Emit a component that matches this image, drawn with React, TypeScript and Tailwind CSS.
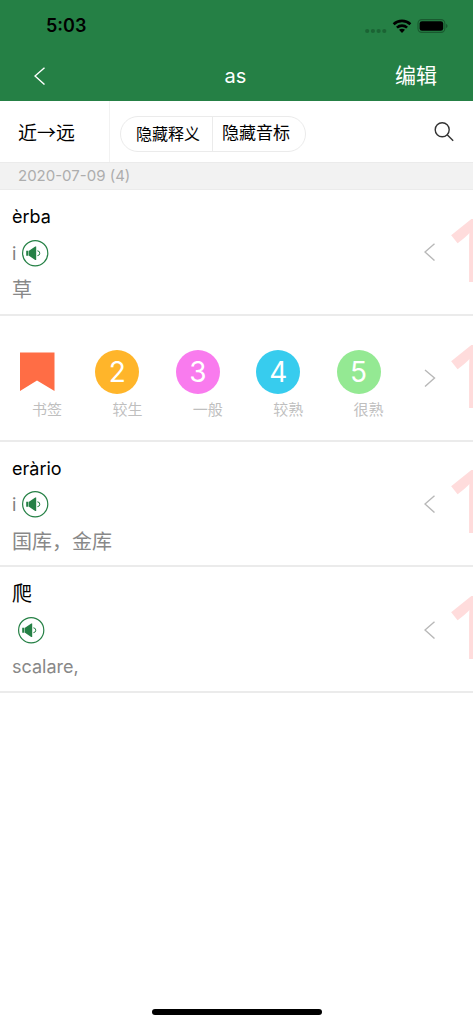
import { useState } from "react";

interface Word {
  id: number;
  text: string;
  phonetic: string;
  meaning: string;
}

const words: Word[] = [
  { id: 1, text: "èrba", phonetic: "i", meaning: "草" },
  { id: 2, text: "erba", phonetic: "i", meaning: "草" },
  { id: 3, text: "eràrio", phonetic: "i", meaning: "国库，金库" },
  { id: 4, text: "爬", phonetic: "", meaning: "scalare," },
];

const levels = [
  { value: "2", label: "较生", color: "bg-[#ffb52a]" },
  { value: "3", label: "一般", color: "bg-[#f97bee]" },
  { value: "4", label: "较熟", color: "bg-[#37ccee]" },
  { value: "5", label: "很熟", color: "bg-[#94e993]" },
];

// Latin glyphs run wide, so they are set a little smaller than Chinese
const textSize = (text: string) =>
  /[\u4e00-\u9fff]/.test(text) ? "text-[20px]" : "text-[18px]";

function Chevron({ flipped = false }: { flipped?: boolean }) {
  return (
    <svg viewBox="0 0 12 18" className="w-3 h-[18px]" fill="none" stroke="currentColor" strokeWidth="1.4">
      <path d={flipped ? "M1 1 L10.5 9 L1 17.5" : "M10.5 0.8 L1 9 L10.5 17.5"} />
    </svg>
  );
}

function StatusBar() {
  return (
    <div className="flex items-center justify-between h-[51px] pl-[46px] pr-[25px] pt-px text-black">
      <span className="text-[18px] leading-6 font-semibold">5:03</span>
      <div className="flex items-center">
        <svg viewBox="0 0 22 6" className="w-[22px] h-[6px] mt-[9px]" fill="#1b6334">
          <circle cx="2.2" cy="3" r="2.1" />
          <circle cx="7.9" cy="3" r="2.1" />
          <circle cx="13.6" cy="3" r="2.1" />
          <circle cx="19.3" cy="3" r="2.1" />
        </svg>
        <svg viewBox="0 0 20 14" className="w-5 h-[14px] ml-[5px]" fill="none" stroke="#000" strokeWidth="2.6">
          <path d="M1.6 5.2 C6.3 0.7 13.7 0.7 18.4 5.2" />
          <path d="M4.9 8.6 C7.8 5.9 12.2 5.9 15.1 8.6" />
          <path d="M7 10.8 Q10 8.6 13 10.8 L10 13.9 Z" fill="#000" stroke="none" />
        </svg>
        <svg viewBox="0 0 31 14" className="w-[31px] h-[14px] ml-[5px]">
          <rect x="1" y="0.6" width="26.8" height="12.8" rx="3.8" fill="none" stroke="#19592f" strokeWidth="1.1" />
          <rect x="2.6" y="2.2" width="23.6" height="9.6" rx="2.4" fill="#000" />
          <path d="M28.9 4.7 Q30.6 5.4 30.6 7 Q30.6 8.6 28.9 9.3 Z" fill="#19592f" />
        </svg>
      </div>
    </div>
  );
}

function SpeakerButton() {
  return (
    <button type="button" aria-label="发音" className="block">
      <svg viewBox="0 0 27 27" className="w-[27px] h-[27px]">
        <circle cx="13.2" cy="13.2" r="12.6" fill="none" stroke="#258045" strokeWidth="1.2" />
        <path d="M4.2 10.7 H6.5 V15.8 H4.2 Z M7 10.7 L13.2 6.6 H14.2 V20 H13.2 L7 15.8 Z" fill="#258045" />
        <path d="M15.4 10.8 Q17.8 11 17.8 13.2 Q17.8 15.5 15.4 15.7" fill="none" stroke="#258045" strokeWidth="1" />
      </svg>
    </button>
  );
}

function WordRow({ word }: { word: Word }) {
  return (
    <div className="flex-1 pl-3 pt-[9px]">
      <h2 className={`flex items-center h-9 leading-7 text-black ${textSize(word.text)}`}>{word.text}</h2>
      <div className="flex items-center h-9 gap-[6px] text-[18px] text-[#808080]">
        <span>{word.phonetic}</span>
        <SpeakerButton />
      </div>
      <p className={`flex items-center h-[38px] leading-7 text-[#888888] ${textSize(word.meaning)}`}>{word.meaning}</p>
    </div>
  );
}

function LevelPicker() {
  return (
    <div className="flex-1 grid grid-cols-5 content-start pl-[15px] pr-[7px] pt-[34px]">
      <button type="button" className="text-left">
        <span className="flex items-center justify-center w-11 h-11">
          <svg viewBox="0 0 35 39" className="w-[35px] h-[39px]">
            <path d="M0 0.5 H34.5 V39 L17 28.5 L0 39 Z" fill="#ff6d45" />
          </svg>
        </span>
        <span className="block pl-[17px] mt-1 text-[15px] leading-6 text-[#bfbfbf]">书签</span>
      </button>
      {levels.map((level) => (
        <button key={level.value} type="button" className="text-left">
          <span className={`flex items-center justify-center w-11 h-11 rounded-full text-[28px] text-white ${level.color}`}>
            {level.value}
          </span>
          <span className="block pl-[17px] mt-1 text-[15px] leading-6 text-[#bfbfbf]">{level.label}</span>
        </button>
      ))}
    </div>
  );
}

export default function App() {
  const [openId, setOpenId] = useState<number | null>(2);

  return (
    <div className="flex flex-col min-h-screen bg-white font-['Inter','Noto_Sans_CJK_SC',sans-serif]" lang="zh-CN">
      <header className="h-[101px] bg-[#258045] text-white">
        <StatusBar />
        <div className="grid grid-cols-3 items-center h-[50px] pl-[34px] pr-9">
          <button type="button" aria-label="返回" className="justify-self-start">
            <Chevron />
          </button>
          <h1 className="text-center text-[20px] leading-7">as</h1>
          <button type="button" className="justify-self-end text-[21px] leading-7">编辑</button>
        </div>
      </header>

      <div className="flex items-center h-[61px] pr-[19px] text-black">
        <button type="button" className="w-[110px] h-full pt-[2px] pl-[18px] border-r border-[#f2f2f2] text-left text-[19px] font-['Noto_Sans_CJK_SC',sans-serif]">
          近→远
        </button>
        <div className="flex h-9 ml-[10px] mt-1 border border-[#ebebeb] rounded-full">
          <button type="button" className="w-[92px] pl-[15px] border-r border-[#ebebeb] text-left text-[16px] whitespace-nowrap">隐藏释义</button>
          <button type="button" className="w-[92px] pl-[9px] text-left text-[17px] whitespace-nowrap">隐藏音标</button>
        </div>
        <button type="button" aria-label="搜索" className="ml-auto">
          <svg viewBox="0 0 20 20" className="w-5 h-5" fill="none" stroke="#333" strokeWidth="1.4">
            <circle cx="8.2" cy="7.8" r="7" />
            <path d="M13.2 12.8 L19.2 18.8" />
          </svg>
        </button>
      </div>

      <div className="flex items-center h-7 pl-[18px] bg-[#f2f2f2] border-y border-[#ebebeb] text-[15px] text-[#adadad]">
        2020-07-09 (4)
      </div>

      <ul className="grid auto-rows-fr min-h-[503px]">
        {words.map((word) => {
          const open = word.id === openId;
          return (
            <li key={word.id} className="flex border-b-2 border-[#ebebeb] overflow-hidden">
              {open ? <LevelPicker /> : <WordRow word={word} />}
              <button
                type="button"
                aria-label={open ? "收起" : "展开"}
                onClick={() => setOpenId(open ? null : word.id)}
                className="w-[22px] pt-px text-[#b8b8b8]"
              >
                <Chevron flipped={open} />
              </button>
              <div className="flex items-center w-[27px] pb-2 overflow-hidden text-[88px] leading-none font-bold text-[#ffdcdc] font-['Open_Sans',sans-serif]">
                1
              </div>
            </li>
          );
        })}
      </ul>

      <footer className="flex justify-center mt-auto pb-[9px]">
        <div className="w-[170px] h-[6px] rounded-full bg-black" />
      </footer>
    </div>
  );
}
